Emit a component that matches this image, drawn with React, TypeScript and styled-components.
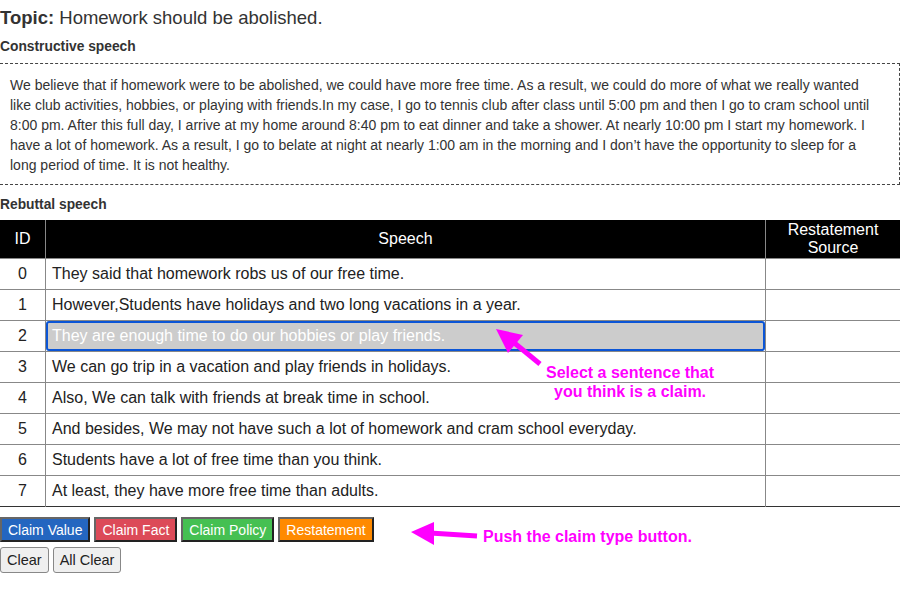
import React, { useState } from 'react';
import styled, { createGlobalStyle } from 'styled-components';

const GlobalStyle = createGlobalStyle`
  html, body {
    margin: 0;
    padding: 0;
    background: #fff;
  }
  body {
    font-family: "Liberation Sans", Arial, Helvetica, sans-serif;
    color: #333;
  }
`;

const Page = styled.div`
  position: relative;
  width: 901px;
  height: 591px;
  overflow: hidden;
`;

const Title = styled.h1`
  margin: 0;
  padding-top: 8px;
  font-size: 18.5px;
  line-height: 20px;
  font-weight: normal;
  color: #333;

  b {
    font-weight: bold;
  }
`;

const Label = styled.h2<{ $top: number }>`
  margin: ${(p) => p.$top}px 0 0;
  font-size: 13.8px;
  line-height: 16px;
  font-weight: bold;
  color: #333;
`;

const SpeechBox = styled.div`
  margin-top: 8px;
  width: 900px;
  box-sizing: border-box;
  border: 1px dashed #444;
  border-left: none;
  padding: 11px 20px 9px 10px;
  font-size: 14px;
  line-height: 20px;
  color: #333;
`;

const Table = styled.table`
  margin-top: 7px;
  width: 900px;
  border-collapse: collapse;
  table-layout: fixed;
  font-size: 16px;
  color: #222;
  border-bottom: 1px solid #333;
`;

const HeadCell = styled.th<{ $w?: number }>`
  background: #000;
  color: #fff;
  font-weight: normal;
  height: 38px;
  padding: 0;
  line-height: 18px;
  text-align: center;
  border-left: 1px solid #888;
  width: ${(p) => (p.$w ? `${p.$w}px` : 'auto')};

  &:first-child {
    border-left: none;
  }
`;

const Row = styled.tr`
  height: 31px;
  border-top: 1px solid #888;
`;

const IdCell = styled.td`
  text-align: center;
  padding: 0;
  border-right: 1px solid #888;
`;

const TextCell = styled.td`
  padding: 0 6px;
  border-right: 1px solid #888;
  white-space: nowrap;
  cursor: pointer;
`;

const PickedCell = styled.td`
  padding: 0;
  border-right: 1px solid #888;
`;

const Picked = styled.div`
  height: 30px;
  box-sizing: border-box;
  margin-top: -1px;
  background: #ccc;
  border: 2px solid #0b55d6;
  border-radius: 3px;
  color: #fff;
  padding: 0 4px;
  line-height: 26px;
  white-space: nowrap;
`;

const SourceCell = styled.td`
  padding: 0;
`;

const ButtonRow = styled.div<{ $top: number }>`
  display: flex;
  gap: 4px;
  margin-top: ${(p) => p.$top}px;
`;

const ClaimButton = styled.button<{ $bg: string }>`
  height: 25px;
  padding: 0 6px;
  background: ${(p) => p.$bg};
  color: #fff;
  font-family: "Liberation Sans", Arial, sans-serif;
  font-size: 14px;
  border: 2px solid;
  border-color: #666 #222 #222 #666;
  border-radius: 0;
  cursor: pointer;
`;

const PlainButton = styled.button`
  height: 26px;
  padding: 0 6px;
  background: #efefef;
  color: #222;
  font-family: "Liberation Sans", Arial, sans-serif;
  font-size: 14.5px;
  border: 1px solid #888;
  border-radius: 3px;
  cursor: pointer;
`;

const Note = styled.div<{ $x: number; $y: number }>`
  position: absolute;
  left: ${(p) => p.$x}px;
  top: ${(p) => p.$y}px;
  color: #ff00ff;
  font-weight: bold;
  font-size: 16px;
  line-height: 19px;
  text-align: center;
  white-space: nowrap;
`;

const ArrowLayer = styled.svg`
  position: absolute;
  left: 0;
  top: 0;
  pointer-events: none;
`;

const constructive =
  'We believe that if homework were to be abolished, we could have more free time. As a result, we could do more of what we really wanted like club activities, hobbies, or playing with friends.In my case, I go to tennis club after class until 5:00 pm and then I go to cram school until 8:00 pm. After this full day, I arrive at my home around 8:40 pm to eat dinner and take a shower. At nearly 10:00 pm I start my homework. I have a lot of homework. As a result, I go to belate at night at nearly 1:00 am in the morning and I don’t have the opportunity to sleep for a long period of time. It is not healthy.';

const rebuttal = [
  'They said that homework robs us of our free time.',
  'However,Students have holidays and two long vacations in a year.',
  'They are enough time to do our hobbies or play friends.',
  'We can go trip in a vacation and play friends in holidays.',
  'Also, We can talk with friends at break time in school.',
  'And besides, We may not have such a lot of homework and cram school everyday.',
  'Students have a lot of free time than you think.',
  'At least, they have more free time than adults.',
];

const claimTypes = [
  { label: 'Claim Value', color: '#2466c0' },
  { label: 'Claim Fact', color: '#dc4a58' },
  { label: 'Claim Policy', color: '#45c052' },
  { label: 'Restatement', color: '#ff8a00' },
];

const App: React.FC = () => {
  const [selected, setSelected] = useState<number>(2);

  return (
    <Page>
      <GlobalStyle />
      <Title>
        <b>Topic:</b> Homework should be abolished.
      </Title>
      <Label $top={11}>Constructive speech</Label>
      <SpeechBox>{constructive}</SpeechBox>
      <Label $top={12}>Rebuttal speech</Label>
      <Table>
        <thead>
          <tr>
            <HeadCell $w={45}>ID</HeadCell>
            <HeadCell>Speech</HeadCell>
            <HeadCell $w={134}>
              Restatement
              <br />
              Source
            </HeadCell>
          </tr>
        </thead>
        <tbody>
          {rebuttal.map((text, i) => (
            <Row key={i}>
              <IdCell>{i}</IdCell>
              {i === selected ? (
                <PickedCell>
                  <Picked>{text}</Picked>
                </PickedCell>
              ) : (
                <TextCell onClick={() => setSelected(i)}>{text}</TextCell>
              )}
              <SourceCell />
            </Row>
          ))}
        </tbody>
      </Table>
      <ButtonRow $top={10}>
        {claimTypes.map((c) => (
          <ClaimButton key={c.label} $bg={c.color}>
            {c.label}
          </ClaimButton>
        ))}
      </ButtonRow>
      <ButtonRow $top={5}>
        <PlainButton>Clear</PlainButton>
        <PlainButton>All Clear</PlainButton>
      </ButtonRow>

      <Note $x={546} $y={363}>
        Select a sentence that
        <br />
        you think is a claim.
      </Note>
      <Note $x={483} $y={527}>
        Push the claim type button.
      </Note>

      <ArrowLayer width={901} height={591}>
        <g fill="#ff00ff" stroke="none">
          <polygon points="496,329 523,335 508,353" />
          <line x1="512" y1="341" x2="540" y2="364" stroke="#ff00ff" strokeWidth="5" />
          <polygon points="411,532 434,522 434,545" />
          <line x1="430" y1="533" x2="477" y2="536" stroke="#ff00ff" strokeWidth="5" />
        </g>
      </ArrowLayer>
    </Page>
  );
};

export default App;
